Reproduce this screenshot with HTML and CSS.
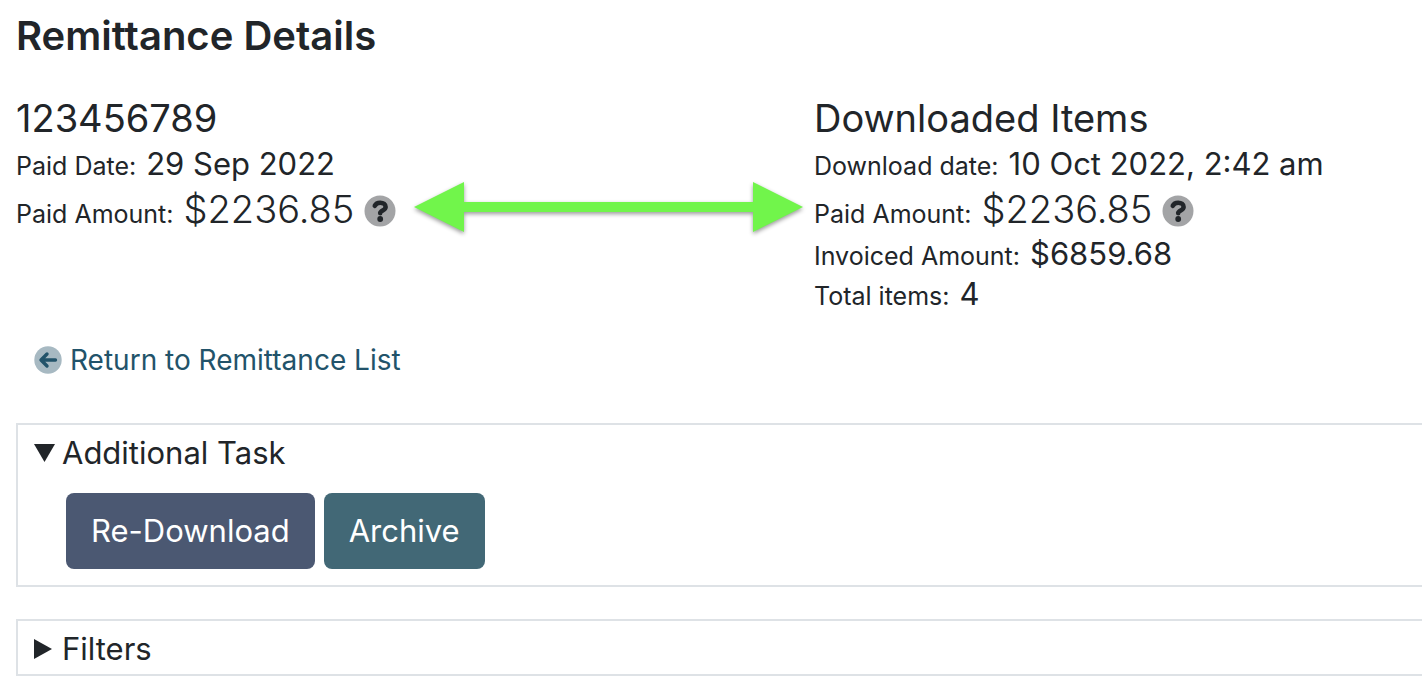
FILE: index.html
```html
<!DOCTYPE html>
<html lang="en">
<head>
<meta charset="utf-8">
<meta name="viewport" content="width=device-width, initial-scale=1">
<title>Remittance Details</title>
<link rel="stylesheet" href="styles.css">
</head>
<body>
<main class="page">
  <h1 class="page-title">Remittance Details</h1>

  <div class="summary">
    <section class="summary-col">
      <h2 class="summary-heading">123456789</h2>
      <p class="field"><span class="field-label">Paid Date:</span> <span class="field-value">29 Sep 2022</span></p>
      <p class="field field-large">
        <span class="field-label">Paid Amount:</span> <span class="amount">$2236.85</span>
        <button class="help" type="button" aria-label="About the paid amount">
          <svg viewBox="0 0 32 32" aria-hidden="true"><circle class="help-disc" cx="16" cy="16" r="15.5"/><path class="help-hook" d="M10.800 10.800C11.800 8.600 13.600 7.800 16.200 7.800c3.200 0 5.400 1.600 5.400 4.200 0 3.500-5.300 3.400-5.400 6.200"/><circle class="help-dot" cx="16.200" cy="24" r="2.900"/></svg>
        </button>
      </p>
      <div class="arrow" aria-hidden="true">
        <svg class="arrow-head" viewBox="0 0 50 50"><path d="M0 25 50 0v50z"/></svg>
        <span class="arrow-shaft"></span>
        <svg class="arrow-head" viewBox="0 0 50 50"><path d="M50 25 0 0v50z"/></svg>
      </div>
    </section>

    <section class="summary-col">
      <h2 class="summary-heading">Downloaded Items</h2>
      <p class="field"><span class="field-label">Download date:</span> <span class="field-value">10 Oct 2022, 2:42 am</span></p>
      <p class="field field-large">
        <span class="field-label">Paid Amount:</span> <span class="amount">$2236.85</span>
        <button class="help" type="button" aria-label="About the downloaded paid amount">
          <svg viewBox="0 0 32 32" aria-hidden="true"><circle class="help-disc" cx="16" cy="16" r="15.5"/><path class="help-hook" d="M10.800 10.800C11.800 8.600 13.600 7.800 16.200 7.800c3.200 0 5.400 1.600 5.400 4.200 0 3.500-5.300 3.400-5.400 6.200"/><circle class="help-dot" cx="16.200" cy="24" r="2.900"/></svg>
        </button>
      </p>
      <p class="field"><span class="field-label">Invoiced Amount:</span> <span class="field-value">$6859.68</span></p>
      <p class="field"><span class="field-label">Total items:</span> <span class="field-value">4</span></p>
    </section>
  </div>

  <a class="back" href="#remittances">
    <svg class="back-icon" viewBox="0 0 28 28" aria-hidden="true"><circle cx="14" cy="14" r="13.700"/><path d="M21.500 14H7.500M13 8 7 14l6 6"/></svg>
    Return to Remittance List
  </a>

  <details class="panel" open>
    <summary class="panel-title"><svg class="marker" viewBox="0 0 22 20" aria-hidden="true"><path d="M0 1h21L10.500 19z"/></svg>Additional Task</summary>
    <div class="panel-actions">
      <button class="btn btn-primary" type="button">Re-Download</button>
      <button class="btn btn-secondary" type="button">Archive</button>
    </div>
  </details>

  <details class="panel">
    <summary class="panel-title"><svg class="marker" viewBox="0 0 22 20" aria-hidden="true"><path d="M0 0v20l18-10z"/></svg>Filters</summary>
  </details>
</main>
</body>
</html>
```
FILE: styles.css
```css
* {
  box-sizing: border-box;
}

body {
  margin: 0;
  background: #fff;
  color: #212529;
  font-family: Inter, "Liberation Sans", sans-serif;
}

h1, h2, p {
  margin: 0;
}

button {
  font: inherit;
  border: 0;
  cursor: pointer;
}

.page {
  padding: 12px 0 0 16px;
}

.page-title {
  font-size: 40px;
  font-weight: 600;
  line-height: 48px;
}

.summary {
  display: grid;
  grid-template-columns: 21fr 16fr;
  margin-top: 34px;
}

.summary-col {
  position: relative;
}

.summary-heading {
  margin-bottom: 2px;
  font-size: 38px;
  font-weight: 400;
  line-height: 48px;
}

.field {
  display: flex;
  align-items: baseline;
  gap: 10px;
  line-height: 40px;
  white-space: nowrap;
}

.field-large {
  line-height: 50px;
}

.field-label {
  font-size: 25px;
  line-height: 1;
}

.field-value {
  font-size: 31px;
}

.amount {
  font-size: 38px;
  font-weight: 300;
}

.help {
  align-self: center;
  width: 32px;
  padding: 4px 0 0;
  background: none;
}

.help svg {
  display: block;
}

.help-disc {
  fill: #a3a4a6;
}

.help-hook {
  fill: none;
  stroke: #212529;
  stroke-width: 4.6;
  stroke-linecap: round;
}

.help-dot {
  fill: #212529;
}

.arrow {
  position: absolute;
  top: 88px;
  left: 398px;
  right: 11px;
  display: flex;
  align-items: center;
  filter: drop-shadow(0 2px 2px rgba(0, 0, 0, 0.4));
}

.arrow-head {
  width: 50px;
  height: 50px;
  fill: #71f54b;
}

.arrow-shaft {
  flex: 1;
  height: 10px;
  background: #71f54b;
}

.back {
  display: inline-flex;
  align-items: center;
  gap: 8px;
  margin: 26px 0 0 18px;
  color: #22536a;
  font-size: 28px;
  line-height: 40px;
  text-decoration: none;
}

.back-icon {
  width: 28px;
  height: 28px;
}

.back-icon circle {
  fill: #a7b9c2;
}

.back-icon path {
  fill: none;
  stroke: #22536a;
  stroke-width: 3.4;
  stroke-linecap: round;
  stroke-linejoin: round;
}

.panel {
  margin-top: 32px;
  border: 2px solid #dee2e6;
  border-right: 0;
  padding: 5px 16px 3px;
}

.back + .panel {
  margin-top: 43px;
}

.panel-title {
  display: flex;
  align-items: center;
  gap: 6px;
  font-size: 31px;
  line-height: 45px;
  cursor: pointer;
  list-style: none;
}

.marker {
  width: 22px;
  height: 20px;
  fill: #212529;
}

.panel-actions {
  display: flex;
  gap: 9px;
  padding: 18px 0 13px 32px;
}

.btn {
  border-radius: 8px;
  padding: 14px 25px;
  color: #fff;
  font-size: 31px;
  line-height: 48px;
}

.btn-primary {
  background: #4b5872;
}

.btn-secondary {
  background: #426876;
}
```
